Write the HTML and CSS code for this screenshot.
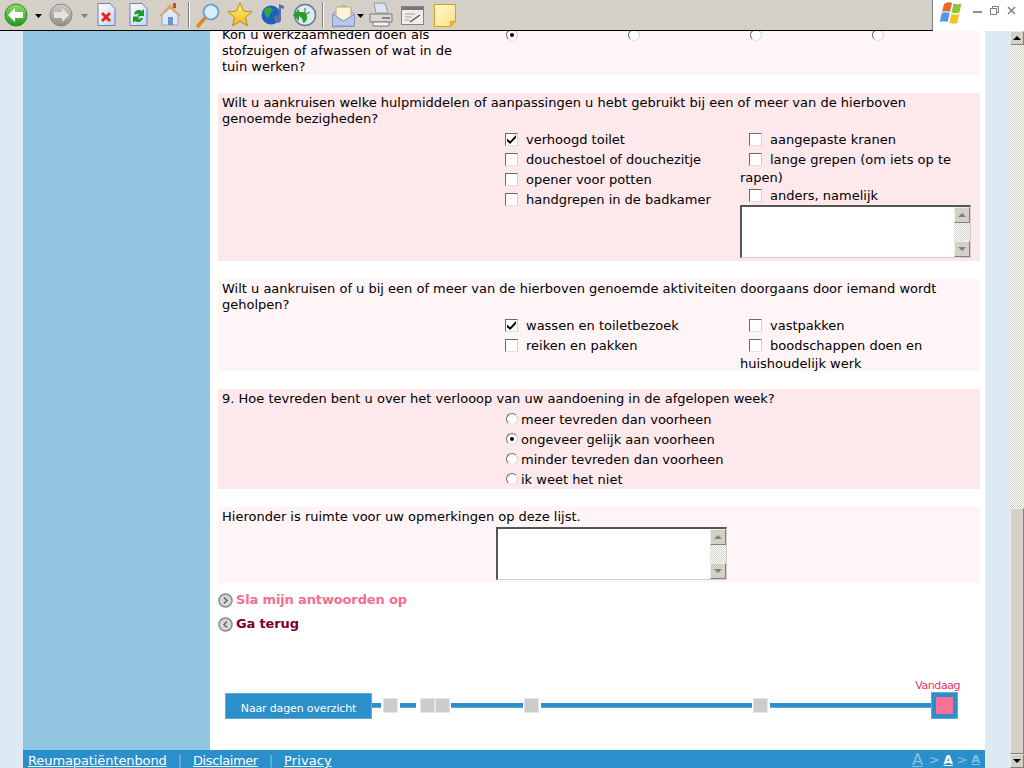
FILE: index.html
```html
<!DOCTYPE html>
<html lang="nl">
<head>
  <meta charset="UTF-8">
  <title>Reumapatiëntenbond - vragenlijst</title>
  <link rel="stylesheet" href="styles.css">
</head>
<body>
  <!-- browser chrome -->
  <div class="chrome">
    <div class="toolbar">
      <svg class="toolbar-icons" width="470" height="30" viewBox="0 0 470 30">
        <defs>
          <linearGradient id="green" x1="0" y1="0" x2="0" y2="1"><stop offset="0" stop-color="#8fe06a"/><stop offset="1" stop-color="#1c9a1c"/></linearGradient>
          <linearGradient id="grey" x1="0" y1="0" x2="0" y2="1"><stop offset="0" stop-color="#cfcdc8"/><stop offset="1" stop-color="#8f8e8a"/></linearGradient>
          <linearGradient id="page" x1="0" y1="0" x2="1" y2="1"><stop offset="0" stop-color="#fff"/><stop offset="1" stop-color="#c4d2f0"/></linearGradient>
          <linearGradient id="gold" x1="0" y1="0" x2="0" y2="1"><stop offset="0" stop-color="#fff27a"/><stop offset="1" stop-color="#f3b51c"/></linearGradient>
          <linearGradient id="note" x1="0" y1="0" x2="1" y2="1"><stop offset="0" stop-color="#fffbd8"/><stop offset="1" stop-color="#ffe07a"/></linearGradient>
        </defs>
        <!-- back -->
        <circle cx="16" cy="15" r="11" fill="url(#green)" stroke="#2a8a2a"/>
        <path d="M8 15l7-7v4h8v6h-8v4z" fill="#fff"/>
        <path d="M35 14h7l-3.500 4z" fill="#000"/>
        <!-- forward -->
        <circle cx="61" cy="15" r="11" fill="url(#grey)" stroke="#8a8985"/>
        <path d="M69 15l-7-7v4h-8v6h8v4z" fill="#e4e3e0"/>
        <path d="M81 14h7l-3.500 4z" fill="#807f7b"/>
        <!-- stop -->
        <path d="M98 3.500h12l5 5v17h-17z" fill="url(#page)" stroke="#6f7fb8"/>
        <path d="M103 12l3 3 3-3 2 2-3 3 3 3-2 2-3-3-3 3-2-2 3-3-3-3z" fill="#e8231c"/>
        <!-- refresh -->
        <path d="M130 3.500h12l5 5v17h-17z" fill="url(#page)" stroke="#6f7fb8"/>
        <path d="M134 14a5 5 0 0 1 8-3l2-2v7h-7l2-2a2.500 2.500 0 0 0-3 .5zM143 18a5 5 0 0 1-8 3l-2 2v-6.500h7l-2 2a2.500 2.500 0 0 0 3-.5z" fill="#1b9b2c"/>
        <!-- home -->
        <path d="M159 16l11-12 11 12-2 1-9-9-9 9z" fill="#f0a64e"/>
        <path d="M162 15l8-7 8 7v10h-16z" fill="#dfe8f6" stroke="#8fa6c8"/>
        <rect x="168" y="17" width="5" height="8" fill="#6e93c7"/>
        <rect x="173" y="3" width="3" height="5" fill="#d0492a"/>
        <path d="M188.500 2v26" stroke="#808080"/>
        <path d="M189.500 2v26" stroke="#fff"/>
        <!-- search -->
        <path d="M198 26l7-8" stroke="#d98a2c" stroke-width="3.500" stroke-linecap="round"/>
        <circle cx="211" cy="12" r="7.500" fill="#d6eefa" stroke="#6fa6cf" stroke-width="2"/>
        <!-- favourites -->
        <path d="M240 3l3.500 8 8.500 .8-6.500 5.500 2 8.500-7.500-4.500-7.500 4.500 2-8.500-6.500-5.500 8.500-.8z" fill="url(#gold)" stroke="#b88a14"/>
        <!-- media -->
        <circle cx="271" cy="15" r="9.500" fill="#1f5fc0"/>
        <path d="M264 9l6-2 3 3-3 4-2 4-3-3zM274 17l4-2 1 3-4 4z" fill="#35a845"/>
        <path d="M279 4l5 2v3l-3-1v12a3.500 3 0 1 1-2-3z" fill="#6464b8"/>
        <!-- history -->
        <circle cx="305" cy="15" r="10.500" fill="#dfe9ee" stroke="#5f7f90" stroke-width="1.500"/>
        <path d="M305 8v7l5-3" fill="none" stroke="#555"/>
        <path d="M293 15l6-6v3h5a6 6 0 0 1-1 11 8 8 0 0 0-4-7v5z" fill="#25a02c"/>
        <path d="M322.500 2v26" stroke="#808080"/>
        <path d="M323.500 2v26" stroke="#fff"/>
        <!-- mail -->
        <path d="M332.500 14l11-9 11 9v12l-22 1z" fill="#c7d4f2" stroke="#8b93c0"/>
        <path d="M336 7h15v10l-7 4-8-4z" fill="#fbf3dc" stroke="#c9a86a"/>
        <path d="M332.500 14l11 7 11-7v12h-22z" fill="#b7c6ee" stroke="#8b93c0"/>
        <path d="M357 14h7l-3.500 4z" fill="#000"/>
        <!-- print -->
        <path d="M374 3h11l3 10h-12z" fill="#dbe6f2" stroke="#8a9aa8"/>
        <path d="M370 14h22v8h-22z" fill="#d9d9d9" stroke="#777"/>
        <path d="M373 22h16v4h-16z" fill="#f4f4f4" stroke="#777"/>
        <path d="M382 18h8" stroke="#333"/>
        <!-- edit -->
        <rect x="401.500" y="6.500" width="22" height="18" fill="#efeeea" stroke="#85847f"/>
        <rect x="402" y="7" width="21" height="3" fill="#77767a"/>
        <path d="M405 14h10M405 17h7M405 20h5" stroke="#a3a29e"/>
        <path d="M410 22l10-7" stroke="#55544f" stroke-width="1.500"/>
        <!-- note -->
        <path d="M434.500 4.500h21v17l-5 5h-16z" fill="url(#note)" stroke="#dca11c"/>
        <path d="M450.500 26.500v-5h5z" fill="#f0c040" stroke="#dca11c"/>
      </svg>
    </div>
    <div class="window-box">
      <svg class="winflag" width="26" height="24" viewBox="0 0 26 24">
        <path d="M5 3c3-2 6-2 8-1l-2 9c-3-1-6-1-8 0z" fill="#ea6a2c"/>
        <path d="M14.500 2.500c3 1 5 1 8 0l-2 9c-3 1-5 1-8 0z" fill="#8cc63e"/>
        <path d="M2.700 12c3-1 5-1 8 0l-2 9c-3-1-5-1-8 0z" fill="#4f9ae0"/>
        <path d="M12.300 13c3 1 5 1 8 0l-2 9c-3 1-5 1-8 0z" fill="#f7c325"/>
      </svg>
      <span class="win-btn"><span class="win-min"></span></span>
      <span class="win-btn"><span class="win-restore"></span></span>
      <svg class="win-btn" width="9" height="9" viewBox="0 0 9 9"><path d="M1 1l7 7M8 1l-7 7" stroke="#808080" stroke-width="1.500"/></svg>
    </div>
  </div>

  <div class="browser">
    <div class="viewport">
      <div class="site">
        <div class="sidebar"></div>
        <div class="content">

          <div class="panel light first">
            <div class="radio-row">
              <p class="cut-question">Kon u werkzaamheden doen als stofzuigen of afwassen of wat in de tuin werken?</p>
              <span><input type="radio" name="q8" checked></span>
              <span><input type="radio" name="q8"></span>
              <span><input type="radio" name="q8"></span>
              <span><input type="radio" name="q8"></span>
            </div>
          </div>

          <div class="panel pink">
            <p class="question">Wilt u aankruisen welke hulpmiddelen of aanpassingen u hebt gebruikt bij een of meer van de hierboven genoemde bezigheden?</p>
            <div class="options">
              <div>
                <label class="opt"><input type="checkbox" checked>verhoogd toilet</label>
                <label class="opt"><input type="checkbox">douchestoel of douchezitje</label>
                <label class="opt"><input type="checkbox">opener voor potten</label>
                <label class="opt"><input type="checkbox">handgrepen in de badkamer</label>
              </div>
              <div>
                <label class="opt"><input type="checkbox">aangepaste kranen</label>
                <label class="opt"><input type="checkbox">lange grepen (om iets op te rapen)</label>
                <label class="opt"><input type="checkbox">anders, namelijk</label>
                <div class="memo">
                  <textarea></textarea>
                  <div class="memo-bar"><span class="btn up"></span><span class="track"></span><span class="btn down"></span></div>
                </div>
              </div>
            </div>
          </div>

          <div class="panel light">
            <p class="question">Wilt u aankruisen of u bij een of meer van de hierboven genoemde aktiviteiten doorgaans door iemand wordt geholpen?</p>
            <div class="options">
              <div>
                <label class="opt"><input type="checkbox" checked>wassen en toiletbezoek</label>
                <label class="opt"><input type="checkbox">reiken en pakken</label>
              </div>
              <div>
                <label class="opt"><input type="checkbox">vastpakken</label>
                <label class="opt"><input type="checkbox">boodschappen doen en huishoudelijk werk</label>
              </div>
            </div>
          </div>

          <div class="panel pink">
            <p class="question">9. Hoe tevreden bent u over het verlooop van uw aandoening in de afgelopen week?</p>
            <div class="options">
              <div>
                <label class="opt radio"><input type="radio" name="q9">meer tevreden dan voorheen</label>
                <label class="opt radio"><input type="radio" name="q9" checked>ongeveer gelijk aan voorheen</label>
                <label class="opt radio"><input type="radio" name="q9">minder tevreden dan voorheen</label>
                <label class="opt radio"><input type="radio" name="q9">ik weet het niet</label>
              </div>
            </div>
          </div>

          <div class="panel light last">
            <p class="question">Hieronder is ruimte voor uw opmerkingen op deze lijst.</p>
            <div class="options">
              <div class="memo">
                <textarea></textarea>
                <div class="memo-bar"><span class="btn up"></span><span class="track"></span><span class="btn down"></span></div>
              </div>
            </div>
          </div>

          <a class="action save" href="#">
            <svg width="15" height="15" viewBox="0 0 15 15"><circle cx="7.500" cy="7.500" r="6.500" fill="#d8d8d8" stroke="#8a8a8a" stroke-width="1.500"/><path d="M6 4.500l3 3-3 3" fill="none" stroke="#666" stroke-width="1.500"/></svg>
            Sla mijn antwoorden op
          </a>
          <a class="action back" href="#">
            <svg width="15" height="15" viewBox="0 0 15 15"><circle cx="7.500" cy="7.500" r="6.500" fill="#d8d8d8" stroke="#8a8a8a" stroke-width="1.500"/><path d="M9 4.500l-3 3 3 3" fill="none" stroke="#666" stroke-width="1.500"/></svg>
            Ga terug
          </a>

          <div class="timeline">
            <a class="overview" href="#">Naar dagen overzicht</a>
            <span class="seg w9"></span>
            <span class="day gap3"></span>
            <span class="seg w16 gap3"></span>
            <span class="day gap5"></span>
            <span class="day gap2"></span>
            <span class="seg w72 gap2"></span>
            <span class="day gap2"></span>
            <span class="seg w211 gap3"></span>
            <span class="day gap2"></span>
            <span class="seg w161 gap3"></span>
            <span class="today-wrap">
              <span class="today-label">Vandaag</span>
              <span class="today"><span></span></span>
            </span>
          </div>
        </div>
      </div>
      <div class="footer">
        <a href="#">Reumapatiëntenbond</a><span class="sep">|</span>
        <a class="tight" href="#">Disclaimer</a><span class="sep">|</span>
        <a class="wide" href="#">Privacy</a>
        <div class="sizes">
          <a class="big" href="#">A</a><span>&gt;</span><a class="mid" href="#">A</a><span>&gt;</span><a class="small" href="#">A</a>
        </div>
      </div>
    </div>

    <div class="scrollbar">
      <span class="sbtn"><i class="arrow-up"></i></span>
      <span class="strack"></span>
      <span class="sthumb"></span>
      <span class="sbtn"><i class="arrow-down"></i></span>
    </div>
  </div>
</body>
</html>
```

FILE: styles.css
```css
* {
  box-sizing: border-box;
}

html, body {
  margin: 0;
  padding: 0;
  height: 768px;
  overflow: hidden;
}

body {
  display: flex;
  flex-direction: column;
  font-family: "DejaVu Sans", Verdana, sans-serif;
  font-size: 13px;
  line-height: 16px;
  color: #000;
  background: #fff;
}

/* browser chrome */
.chrome {
  display: flex;
  height: 31px;
  flex: none;
}

.toolbar {
  width: 934px;
  background: #d4d0c8;
  border-bottom: 1px solid #000;
  border-right: 1px solid #808080;
}

.toolbar-icons {
  display: block;
}

.window-box {
  flex: 1;
  display: flex;
  align-items: flex-start;
  background: #fff;
  padding: 1px 8px 0 6px;
}

.winflag {
  margin-right: 8px;
}

.win-btn {
  display: block;
  width: 9px;
  height: 9px;
  margin: 5px 0 0 8px;
  position: relative;
}

.winflag + .win-btn {
  margin-left: 0;
}

.win-min {
  display: block;
  height: 2px;
  margin-top: 5px;
  background: #909090;
}

.win-restore {
  display: block;
  width: 7px;
  height: 7px;
  margin-top: 2px;
  border: 1px solid #808080;
  box-shadow: 2px -2px 0 -1px #fff, 2px -2px 0 0 #808080;
  background: #fff;
}

.browser {
  flex: 1;
  display: flex;
  min-height: 0;
}

.viewport {
  flex: 1;
  display: flex;
  flex-direction: column;
  padding: 0 25px 0 23px;
  background: #dde9f3;
  overflow: hidden;
}

.site {
  flex: 1;
  display: flex;
  min-height: 0;
}

.sidebar {
  width: 187px;
  background: #91c5e1;
}

.content {
  flex: 1;
  background: #fff;
  padding: 0 5px 0 8px;
  overflow: hidden;
}

/* question panels */
.panel {
  margin-bottom: 18px;
  padding-top: 2px;
}

.panel.light {
  background: #fff5f6;
}

.panel.pink {
  background: #fde8ec;
}

.panel.first {
  margin-top: -7px;
}

.panel.last {
  margin-bottom: 5px;
}

.question {
  margin: 0;
  padding: 0 4px 3px;
}

.cut-question {
  margin: 0;
  padding: 1px 0 0 4px;
  width: 250px;
}

.radio-row {
  display: grid;
  grid-template-columns: 278px 122px 122px 122px 122px;
}

.options {
  display: grid;
  grid-template-columns: 244px 1fr;
  margin-left: 278px;
}

.opt {
  display: block;
  padding-top: 2px;
}

.opt:last-child {
  margin-bottom: -1px;
}

/* form controls */
input[type=checkbox],
input[type=radio] {
  appearance: none;
  -webkit-appearance: none;
  display: inline-block;
  position: relative;
  width: 13px;
  height: 13px;
  margin: 1px 8px 4px 9px;
  vertical-align: top;
  background: #fff;
  border: 1px solid;
  border-color: #6a6a6a #d4d0c8 #e4e1da #6a6a6a;
}

input[type=radio] {
  width: 12px;
  height: 12px;
  border-radius: 50%;
}

.opt.radio input {
  margin: 1px 3px 5px 10px;
}

.radio-row input[type=radio] {
  margin: 3px 0 0 10px;
}

input[type=checkbox]:checked::after {
  content: "";
  position: absolute;
  left: 1px;
  top: 1px;
  width: 9px;
  height: 9px;
  background: #000;
  clip-path: polygon(0 40%, 35% 70%, 100% 0, 100% 30%, 35% 100%, 0 70%);
}

input[type=radio]:checked::after {
  content: "";
  position: absolute;
  left: 3px;
  top: 3px;
  width: 4px;
  height: 4px;
  border-radius: 50%;
  background: #000;
}

.memo {
  display: flex;
  width: 231px;
  height: 53px;
  margin: -1px 0 3px;
  background: #fff;
  border-top: 2px solid #555;
  border-left: 2px solid #555;
  border-right: 1px solid #d4d0c8;
  border-bottom: 1px solid #d4d0c8;
}

.memo textarea {
  flex: 1;
  min-width: 0;
  border: 0;
  padding: 0;
  resize: none;
  background: #fff;
  outline: none;
}

.memo-bar {
  display: flex;
  flex-direction: column;
  width: 16px;
}

.memo-bar .track {
  flex: 1;
  background: repeating-conic-gradient(#d4d0c8 0 25%, #fff 0 50%) 0 0 / 2px 2px;
}

.memo-bar .btn {
  position: relative;
  height: 16px;
  background: #d4d0c8;
  border: 1px solid;
  border-color: #eeece8 #808080 #808080 #eeece8;
}

.btn::after {
  content: "";
  position: absolute;
  left: 3px;
  border-left: 4px solid transparent;
  border-right: 4px solid transparent;
}

.btn.up::after {
  top: 5px;
  border-bottom: 4px solid #808080;
}

.btn.down::after {
  top: 5px;
  border-top: 4px solid #808080;
}

/* links under the form */
.action {
  display: flex;
  align-items: center;
  gap: 3px;
  height: 24px;
  font-weight: bold;
  letter-spacing: -.14px;
  text-decoration: none;
}

.action.save {
  color: #f26f92;
}

.action.back {
  color: #7a0030;
}

/* day timeline */
.timeline {
  display: flex;
  align-items: center;
  height: 30px;
  margin: 54px 0 0 7px;
}

.overview {
  display: block;
  width: 147px;
  height: 26px;
  margin-top: 1px;
  background: #2a8fcb;
  border: 1px solid #62abd8;
  color: #fff;
  font-size: 11px;
  line-height: 30px;
  letter-spacing: -.15px;
  text-align: center;
  text-decoration: none;
}

.seg {
  display: block;
  height: 5px;
  margin-top: 1px;
  background: #2a8fcb;
  border-bottom: 1px solid #62abd8;
}

.w9 { width: 9px; }
.w16 { width: 16px; }
.w72 { width: 72px; }
.w211 { width: 211px; }
.w161 { width: 161px; }

.gap2 { margin-left: 2px; }
.gap3 { margin-left: 3px; }
.gap5 { margin-left: 5px; }

.day {
  display: block;
  width: 13px;
  height: 13px;
  margin-top: 1px;
  background: #ccc;
  box-shadow: 0 0 0 1px #e6e6e6;
}

.today-wrap {
  position: relative;
  display: block;
}

.today {
  display: block;
  width: 27px;
  height: 27px;
  margin-top: 1px;
  padding: 5px;
  background: #2a8fcb;
  border: 1px solid #62abd8;
}

.today span {
  display: block;
  width: 17px;
  height: 17px;
  margin: -1px;
  background: #fc6f96;
}

.today-label {
  position: absolute;
  right: -2px;
  top: -13px;
  font-size: 11px;
  letter-spacing: -.45px;
  color: #e0336f;
  white-space: nowrap;
}

/* footer */
.footer {
  flex: none;
  display: flex;
  height: 18px;
  padding: 3px 5px 0;
  background: #2a8fcb;
  color: #fff;
  letter-spacing: -.1px;
}

.footer a {
  color: #fff;
}

.footer .tight {
  letter-spacing: -.4px;
}

.footer .wide {
  letter-spacing: .1px;
}

.sep {
  margin: 0 11px;
  color: #86c0e4;
}

.sizes {
  margin-left: auto;
  display: flex;
  align-items: flex-end;
  gap: 4px;
  color: #86c0e4;
  font-weight: bold;
}

.sizes span {
  font-weight: normal;
}

.footer .sizes a {
  color: #86c0e4;
}

.footer .sizes .big {
  margin-right: 2px;
  font-size: 16px;
  font-weight: normal;
}

.footer .sizes .mid {
  color: #fff;
  font-size: 12px;
}

.footer .sizes .small {
  font-size: 11px;
}

/* page scrollbar */
.scrollbar {
  flex: none;
  display: flex;
  flex-direction: column;
  width: 14px;
  background: #d4d0c8;
}

.sbtn {
  display: flex;
  align-items: center;
  justify-content: center;
  height: 14px;
  flex: none;
  background: #d4d0c8;
  border: 1px solid;
  border-color: #eeece8 #808080 #808080 #eeece8;
}

.strack {
  height: 463px;
  background: repeating-conic-gradient(#d4d0c8 0 25%, #fff 0 50%) 0 0 / 2px 2px;
}

.sthumb {
  flex: 1;
  background: #d4d0c8;
  border: 1px solid;
  border-color: #eeece8 #808080 #808080 #eeece8;
}

.arrow-up {
  border-left: 4px solid transparent;
  border-right: 4px solid transparent;
  border-bottom: 4px solid #000;
}

.arrow-down {
  border-left: 4px solid transparent;
  border-right: 4px solid transparent;
  border-top: 4px solid #000;
}
```
